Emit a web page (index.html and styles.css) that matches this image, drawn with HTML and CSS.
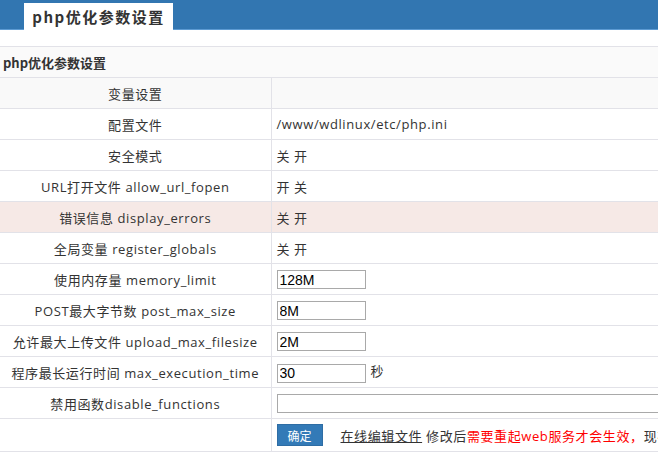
FILE: index.html
```html
<!DOCTYPE html>
<html lang="zh-CN">
<head>
<meta charset="utf-8">
<title>php优化参数设置</title>
<link rel="stylesheet" href="styles.css">
</head>
<body>
<header class="topbar">
  <div class="tab">php优化参数设置</div>
</header>
<main class="content">
  <table class="grid">
    <colgroup><col class="c1"><col class="c2"></colgroup>
    <tr class="head"><th colspan="2">php优化参数设置</th></tr>
    <tr class="sub"><td class="lbl">变量设置</td><td class="val"></td></tr>
    <tr><td class="lbl">配置文件</td><td class="val">/www/wdlinux/etc/php.ini</td></tr>
    <tr><td class="lbl">安全模式</td><td class="val">关 <span class="u">开</span></td></tr>
    <tr><td class="lbl">URL打开文件 allow_url_fopen</td><td class="val">开 <span class="u">关</span></td></tr>
    <tr class="hl"><td class="lbl">错误信息 display_errors</td><td class="val">关 <span class="u">开</span></td></tr>
    <tr><td class="lbl">全局变量 register_globals</td><td class="val">关 <span class="u">开</span></td></tr>
    <tr><td class="lbl">使用内存量 memory_limit</td><td class="val"><input class="inp" type="text" value="128M"></td></tr>
    <tr><td class="lbl">POST最大字节数 post_max_size</td><td class="val"><input class="inp" type="text" value="8M"></td></tr>
    <tr><td class="lbl">允许最大上传文件 upload_max_filesize</td><td class="val"><input class="inp" type="text" value="2M"></td></tr>
    <tr><td class="lbl">程序最长运行时间 max_execution_time</td><td class="val"><input class="inp" type="text" value="30"><span class="unit">秒</span></td></tr>
    <tr><td class="lbl">禁用函数disable_functions</td><td class="val"><input class="inp wide" type="text" value=""></td></tr>
    <tr class="last"><td class="lbl"></td><td class="val"><div class="actions"><button class="btn" type="button">确定</button><span class="note"><a class="link">在线编辑文件</a> 修改后<span class="red">需要重起web服务才会生效，</span>现在重起</span></div></td></tr>
  </table>
</main>
</body>
</html>
```
FILE: styles.css
```css
html, body {
  margin: 0;
  padding: 0;
  background: #ffffff;
  overflow: hidden;
}
body {
  width: 658px;
  height: 460px;
  font-family: "Open Sans", "Noto Sans CJK SC", sans-serif;
  font-size: 13px;
  letter-spacing: 0.6px;
  color: #333333;
}
.topbar {
  height: 29px;
  background: #3276b1;
  border-bottom: 1px solid #5d9bd3;
  display: flex;
  align-items: flex-end;
  padding-left: 24px;
}
.tab {
  width: 149px;
  height: 27px;
  margin-bottom: -1px;
  background: #ffffff;
  display: flex;
  align-items: center;
  justify-content: center;
  font-weight: bold;
  font-size: 15px;
  letter-spacing: 1.5px;
  color: #333333;
  font-family: "Noto Sans CJK SC", sans-serif;
}
.content {
  padding-top: 16px;
  width: 820px;
}
.grid {
  border-collapse: collapse;
  width: 820px;
  table-layout: fixed;
}
.c1 { width: 271px; }
.c2 { width: 549px; }
.grid th, .grid td {
  border-top: 1px solid #e2e2e8;
  border-bottom: 1px solid #e2e2e8;
  height: 30px;
  padding: 0;
  white-space: nowrap;
  overflow: hidden;
}
.head th {
  text-align: left;
  padding-left: 3px;
  font-weight: bold;
  letter-spacing: 0;
  background: #fafafa;
  font-family: "Noto Sans CJK SC", sans-serif;
}
.sub td { background: #f9f9f9; }
.hl td { background: #f6e9e6; }
.lbl {
  text-align: center;
  border-right: 1px solid #e2e2e8;
}
.val {
  padding-left: 5px !important;
  text-align: left;
}
.inp {
  box-sizing: border-box;
  width: 89px;
  height: 19px;
  border: 1px solid #a9a9a9;
  padding: 0 2px;
  margin: 0;
  font-family: "Liberation Sans", Arial, sans-serif;
  font-size: 14px;
  letter-spacing: 0;
  color: #000;
  vertical-align: middle;
}
.inp.wide { width: 500px; }
.unit { margin-left: 5px; }
.last td { height: 32px; }
.actions {
  display: flex;
  align-items: center;
}
.btn {
  box-sizing: border-box;
  width: 46px;
  height: 22px;
  background: #337ab7;
  border: 1px solid #2e6da4;
  color: #ffffff;
  font-family: "Noto Sans CJK SC", sans-serif;
  font-size: 12px;
  letter-spacing: 0;
  padding: 0;
  margin: 0;
}
.note { margin-left: 18px; }
.link { text-decoration: underline; color: #333333; }
.red { color: #ff0000; }
```
